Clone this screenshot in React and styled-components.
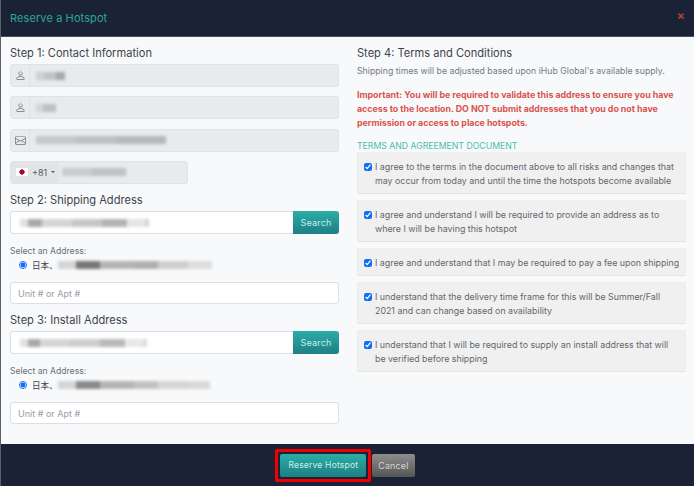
import styled, { createGlobalStyle } from "styled-components";
import { BsPerson, BsEnvelope } from "react-icons/bs";

const GlobalStyle = createGlobalStyle`
  html, body {
    margin: 0;
    padding: 0;
    background: #1a2236;
  }
  body {
    font-family: Inter, "Noto Sans CJK JP", sans-serif;
  }
`;

const Modal = styled.div`
  width: 694px;
  height: 486px;
  display: flex;
  flex-direction: column;
  overflow: hidden;
  box-sizing: border-box;
  border-left: 1px solid #5b5f66;
`;

const Header = styled.div`
  height: 37px;
  flex: none;
  box-sizing: border-box;
  padding: 0 9px;
  display: flex;
  align-items: center;
  justify-content: space-between;
  background: #1a2236;
  border-bottom: 1px solid #4a505e;
`;

const Title = styled.div`
  font-size: 11px;
  letter-spacing: 0.1px;
  color: #2aa79b;
`;

const Close = styled.div`
  font-size: 12px;
  font-weight: 700;
  color: #b53a3a;
  line-height: 1;
  margin-bottom: 4px;
`;

const Body = styled.div`
  flex: 1;
  display: flex;
  gap: 18px;
  padding: 9px 8px 0 9px;
  background: #f8f9fb;
`;

const Column = styled.div`
  width: 329px;
  flex: none;
`;

const Heading = styled.h5`
  margin: ${(p) => p.$mt || 0}px 0 4px;
  font-size: 11.1px;
  line-height: 14px;
  font-weight: 400;
  color: #3f434a;
`;

const InputGroup = styled.div`
  display: flex;
  height: 23px;
  width: ${(p) => p.$width || "100%"};
  margin-bottom: ${(p) => p.$mb ?? 9.3}px;
  box-sizing: border-box;
  border: 1px solid #dfe2e6;
  border-radius: 3px;
  background: #e8eaed;
  overflow: hidden;
`;

const IconCell = styled.div`
  width: 18px;
  flex: none;
  display: flex;
  align-items: center;
  justify-content: center;
  color: #6b7178;
  font-size: 11px;
  border-right: 1px solid #dfe2e6;
`;

const Field = styled.div`
  flex: 1;
  display: flex;
  align-items: center;
  padding: 0 ${(p) => p.$pad || 6}px;
  font-size: 9px;
  color: #8b9097;
`;

const Redacted = styled.div`
  display: flex;
  height: 8px;
  filter: blur(1.6px);
`;

const Smudge = styled.span`
  height: 100%;
  background: ${(p) => p.$shade};
`;

const FlagCell = styled.div`
  display: flex;
  align-items: center;
  gap: 4px;
  padding: 0 4px 0 5px;
  font-size: 9px;
  color: #555a61;
  background: #e2e4e8;
`;

const Flag = styled.span`
  width: 12px;
  height: 8px;
  background: radial-gradient(circle at center, #bc002d 2.4px, #fff 2.9px);
`;

const Caret = styled.span`
  width: 0;
  height: 0;
  border: 2px solid transparent;
  border-top-color: #555a61;
  margin-top: 2px;
`;

const SearchRow = styled.div`
  display: flex;
  height: 23px;
  margin-bottom: 11px;
`;

const SearchInput = styled.div`
  flex: 1;
  display: flex;
  align-items: center;
  box-sizing: border-box;
  padding: 0 9px;
  background: #fff;
  border: 1px solid #dcdfe3;
  border-right: 0;
  border-radius: 3px 0 0 3px;
`;

const SearchButton = styled.div`
  width: 46px;
  display: flex;
  align-items: center;
  justify-content: center;
  font-size: 9px;
  letter-spacing: 0.2px;
  color: #c9ecea;
  border-radius: 0 3px 3px 0;
  background: linear-gradient(180deg, #2bada6, #1d7f85);
`;

const SelectLabel = styled.div`
  font-size: 8.6px;
  line-height: 13px;
  color: #6b7077;
`;

const RadioRow = styled.div`
  display: flex;
  align-items: center;
  height: 14px;
  margin: 0 0 10px 9px;
  font-size: 8.6px;
  color: #3f434a;
`;

const Radio = styled.input`
  width: 8px;
  height: 8px;
  margin: 0 5px 0 0;
  accent-color: #0d6efd;
`;

const UnitInput = styled.div`
  height: 22px;
  box-sizing: border-box;
  display: flex;
  align-items: center;
  padding: 0 7px;
  font-size: 9px;
  color: #9a9ea5;
  background: #fff;
  border: 1px solid #dcdfe3;
  border-radius: 3px;
`;

const Note = styled.p`
  margin: 1px 0 10px;
  font-size: 8.75px;
  line-height: 14px;
  color: #75797f;
`;

const Warning = styled.p`
  margin: 0 0 11px;
  font-size: 8.8px;
  line-height: 14px;
  font-weight: 700;
  color: #d9534f;
`;

const TermsTitle = styled.div`
  font-size: 8.7px;
  line-height: 11px;
  color: #4cbcb2;
`;

const TermList = styled.div`
  display: flex;
  flex-direction: column;
  gap: 6px;
`;

const Term = styled.label`
  display: flex;
  gap: 3px;
  box-sizing: border-box;
  padding: 7px 4px 5px 6px;
  font-size: 8.85px;
  line-height: 14px;
  color: #63676d;
  background: #f0f0f1;
  border: 1px solid #ededee;
  border-bottom-color: #e4e5e7;
`;

const Check = styled.input`
  width: 8px;
  height: 8px;
  flex: none;
  margin: 3px 0 0;
  accent-color: #0d6efd;
`;

const Footer = styled.div`
  height: 42px;
  flex: none;
  display: flex;
  align-items: center;
  justify-content: center;
  gap: 1px;
  padding-right: 5px;
  background: #1a2236;
`;

const Highlight = styled.div`
  display: flex;
  padding: 2px;
  border: 3px solid #f00000;
  border-radius: 2px;
`;

const Button = styled.div`
  height: 23px;
  box-sizing: border-box;
  display: flex;
  align-items: center;
  padding: 0 ${(p) => (p.$primary ? 8 : 6)}px;
  font-size: ${(p) => (p.$primary ? 8.5 : 8.9)}px;
  letter-spacing: 0.2px;
  color: ${(p) => (p.$primary ? "#cdeeea" : "#d5d5d5")};
  border-radius: 2px;
  background: ${(p) =>
    p.$primary
      ? "linear-gradient(180deg, #2bada6, #1d7f85)"
      : "linear-gradient(180deg, #8e8e8e, #555)"};
`;

const terms = [
  "I agree to the terms in the document above to all risks and changes that may occur from today and until the time the hotspots become available",
  "I agree and understand I will be required to provide an address as to where I will be having this hotspot",
  "I agree and understand that I may be required to pay a fee upon shipping",
  "I understand that the delivery time frame for this will be Summer/Fall 2021 and can change based on availability",
  "I understand that I will be required to supply an install address that will be verified before shipping",
];

const smudges = {
  first: [[8, "#cdcfd2"], [12, "#c0c2c6"], [9, "#a5a8ad"]],
  last: [[7, "#d2d4d7"], [13, "#bcbfc3"]],
  email: [[40, "#c6c8cc"], [40, "#bec0c5"], [50, "#b5b8bc"]],
  phone: [[30, "#c9cbcf"], [34, "#bfc2c6"]],
  ship: [[8, "#e0e0e0"], [14, "#a9a9a9"], [30, "#d5d5d5"], [30, "#c6c6c6"], [25, "#b4b4b4"], [18, "#e6e6e6"], [4, "#d5d5d5"]],
  install: [[8, "#e0e0e0"], [12, "#a9a9a9"], [30, "#d5d5d5"], [30, "#cdcdcd"], [25, "#b8b8b8"], [18, "#e8e8e8"], [4, "#dddddd"]],
  shipAddr: [[18, "#d5d5d5"], [24, "#777"], [34, "#b5b5b5"], [24, "#b0b0b0"], [30, "#cfcfcf"], [24, "#dddddd"]],
  installAddr: [[18, "#d5d5d5"], [24, "#8a8a8a"], [34, "#b5b5b5"], [24, "#c2c2c2"], [30, "#d5d5d5"], [22, "#d9d9d9"]],
};

const Blur = ({ name }) => (
  <Redacted>
    {smudges[name].map(([width, shade], i) => (
      <Smudge key={i} $shade={shade} style={{ width }} />
    ))}
  </Redacted>
);

const AddressBlock = ({ search, addr }) => (
  <>
    <SearchRow>
      <SearchInput>
        <Blur name={search} />
      </SearchInput>
      <SearchButton>Search</SearchButton>
    </SearchRow>
    <SelectLabel>Select an Address:</SelectLabel>
    <RadioRow>
      <Radio type="radio" defaultChecked />
      日本、
      <Blur name={addr} />
    </RadioRow>
    <UnitInput>Unit # or Apt #</UnitInput>
  </>
);

const App = () => {
  return (
    <Modal>
      <GlobalStyle />
      <Header>
        <Title>Reserve a Hotspot</Title>
        <Close>×</Close>
      </Header>
      <Body>
        <Column>
          <Heading>Step 1: Contact Information</Heading>
          <InputGroup>
            <IconCell>
              <BsPerson />
            </IconCell>
            <Field>
              <Blur name="first" />
            </Field>
          </InputGroup>
          <InputGroup>
            <IconCell>
              <BsPerson />
            </IconCell>
            <Field>
              <Blur name="last" />
            </Field>
          </InputGroup>
          <InputGroup>
            <IconCell>
              <BsEnvelope />
            </IconCell>
            <Field>
              <Blur name="email" />
            </Field>
          </InputGroup>
          <InputGroup $width="178px" $mb={9.6}>
            <FlagCell>
              <Flag />
              +81
              <Caret />
            </FlagCell>
            <Field $pad={3}>
              <Blur name="phone" />
            </Field>
          </InputGroup>
          <Heading>Step 2: Shipping Address</Heading>
          <AddressBlock search="ship" addr="shipAddr" />
          <Heading $mt={9}>Step 3: Install Address</Heading>
          <AddressBlock search="install" addr="installAddr" />
        </Column>
        <Column>
          <Heading>Step 4: Terms and Conditions</Heading>
          <Note>Shipping times will be adjusted based upon iHub Global's available supply.</Note>
          <Warning>
            Important: You will be required to validate this address to ensure you have access to
            the location. DO NOT submit addresses that you do not have permission or access to place
            hotspots.
          </Warning>
          <TermsTitle>TERMS AND AGREEMENT DOCUMENT</TermsTitle>
          <TermList>
            {terms.map((term) => (
              <Term key={term}>
                <Check type="checkbox" defaultChecked />
                <span>{term}</span>
              </Term>
            ))}
          </TermList>
        </Column>
      </Body>
      <Footer>
        <Highlight>
          <Button $primary>Reserve Hotspot</Button>
        </Highlight>
        <Button>Cancel</Button>
      </Footer>
    </Modal>
  );
};

export default App;
